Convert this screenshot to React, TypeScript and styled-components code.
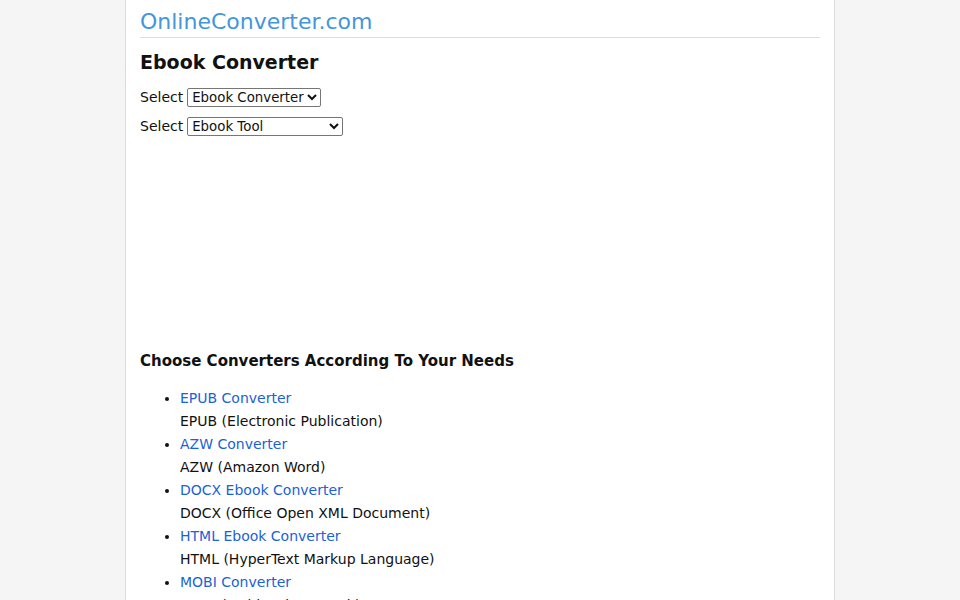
import React from 'react'
import styled, { createGlobalStyle } from 'styled-components'

const Global = createGlobalStyle`
  html, body {
    margin: 0;
    padding: 0;
    background: #f5f5f5;
    font-family: "DejaVu Sans", Verdana, sans-serif;
    color: #111;
  }
`

const Page = styled.div`
  width: 680px;
  min-height: 100vh;
  margin: 0 auto;
  padding: 0 14px;
  background: #fff;
  border-left: 1px solid #dcdcdc;
  border-right: 1px solid #dcdcdc;
`

const Header = styled.div`
  padding: 7px 0 0;
  border-bottom: 1px solid #dedede;
  font-size: 22px;
  line-height: 30px;

  a {
    color: #4496dc;
    text-decoration: none;
  }
`

const Title = styled.h1`
  margin: 12px 0 0;
  font-size: 19px;
  line-height: 24px;
  font-weight: bold;
`

const Row = styled.div<{ $top: number }>`
  display: flex;
  align-items: center;
  gap: 4px;
  height: 24px;
  margin-top: ${(p) => p.$top}px;
  font-size: 14px;
`

const Select = styled.select<{ $w?: number }>`
  font-family: "DejaVu Sans", Verdana, sans-serif;
  font-size: 13.33px;
  height: 19px;
  padding: 0;
  border: 1px solid #767676;
  border-radius: 2px;
  background: #fff;
  color: #111;
  ${(p) => (p.$w ? `width: ${p.$w}px;` : '')}
`

const AdSpace = styled.div`
  height: 213px;
`

const SubTitle = styled.h2`
  margin: 0;
  font-size: 15px;
  line-height: 20px;
  font-weight: bold;
`

const List = styled.ul`
  margin: 16px 0 0;
  padding-left: 40px;
  font-size: 14px;
  line-height: 23px;
`

const Item = styled.li`
  a {
    color: #1a62d6;
    text-decoration: none;
  }
`

const items = [
  ['EPUB Converter', 'EPUB (Electronic Publication)'],
  ['AZW Converter', 'AZW (Amazon Word)'],
  ['DOCX Ebook Converter', 'DOCX (Office Open XML Document)'],
  ['HTML Ebook Converter', 'HTML (HyperText Markup Language)'],
  ['MOBI Converter', 'MOBI (Mobipocket eBook)'],
  ['PDF Ebook Converter', 'PDF (Portable Document Format)'],
]

export default function App() {
  return (
    <>
      <Global />
      <Page>
        <Header>
          <a href="#">OnlineConverter.com</a>
        </Header>
        <Title>Ebook Converter</Title>
        <Row $top={11}>
          Select
          <Select defaultValue="ebook">
            <option value="ebook">Ebook Converter</option>
          </Select>
        </Row>
        <Row $top={5}>
          Select
          <Select $w={156} defaultValue="tool">
            <option value="tool">Ebook Tool</option>
          </Select>
        </Row>
        <AdSpace />
        <SubTitle>Choose Converters According To Your Needs</SubTitle>
        <List>
          {items.map(([link, desc]) => (
            <Item key={link}>
              <a href="#">{link}</a>
              <div>{desc}</div>
            </Item>
          ))}
        </List>
      </Page>
    </>
  )
}
